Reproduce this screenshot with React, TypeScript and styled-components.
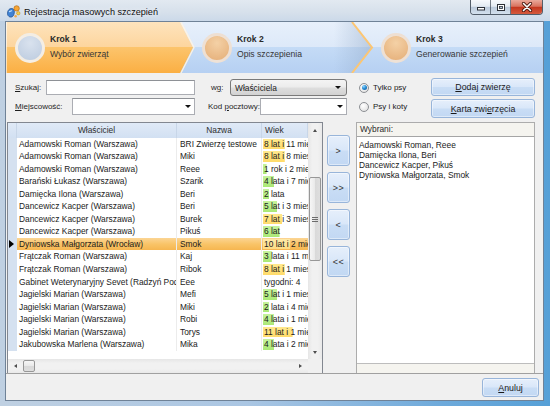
import React from 'react';
import styled, { createGlobalStyle, css } from 'styled-components';

const GlobalStyle = createGlobalStyle`
  * { box-sizing: border-box; }
  html, body { margin: 0; padding: 0; }
  body {
    width: 550px;
    height: 406px;
    overflow: hidden;
    background: #5a9bd3;
    font-family: 'Liberation Sans', Arial, sans-serif;
    color: #1b1b1b;
  }
`;

type Animal = { owner: string; name: string; age: string; years: number | null };

const animals: Animal[] = [
  { owner: 'Adamowski Roman (Warszawa)', name: 'BRI Zwierzę testowe', age: '8 lat i 11 miesięcy', years: 8 },
  { owner: 'Adamowski Roman (Warszawa)', name: 'Miki', age: '8 lat i 8 miesięcy', years: 8 },
  { owner: 'Adamowski Roman (Warszawa)', name: 'Reee', age: '1 rok i 2 miesiące', years: 1 },
  { owner: 'Barański Łukasz (Warszawa)', name: 'Szarik', age: '4 lata i 7 miesięcy', years: 4 },
  { owner: 'Damięcka Ilona (Warszawa)', name: 'Beri', age: '2 lata', years: 2 },
  { owner: 'Dancewicz Kacper (Warszawa)', name: 'Beri', age: '5 lat i 3 miesiące', years: 5 },
  { owner: 'Dancewicz Kacper (Warszawa)', name: 'Burek', age: '7 lat i 3 miesiące', years: 7 },
  { owner: 'Dancewicz Kacper (Warszawa)', name: 'Pikuś', age: '6 lat', years: 6 },
  { owner: 'Dyniowska Małgorzata (Wrocław)', name: 'Smok', age: '10 lat i 2 miesiące', years: 10 },
  { owner: 'Frątczak Roman (Warszawa)', name: 'Kaj', age: '3 lata i 11 miesięcy', years: 3 },
  { owner: 'Frątczak Roman (Warszawa)', name: 'Ribok', age: '8 lat i 1 miesiąc', years: 8 },
  { owner: 'Gabinet Weterynaryjny Sevet (Radzyń Podlaski)', name: 'Eee', age: 'tygodni: 4', years: null },
  { owner: 'Jagielski Marian (Warszawa)', name: 'Mefi', age: '5 lat i 1 miesiąc', years: 5 },
  { owner: 'Jagielski Marian (Warszawa)', name: 'Miki', age: '2 lata i 4 miesiące', years: 2 },
  { owner: 'Jagielski Marian (Warszawa)', name: 'Robi', age: '4 lata i 1 miesiąc', years: 4 },
  { owner: 'Jagielski Marian (Warszawa)', name: 'Torys', age: '11 lat i 1 miesiąc', years: 11 },
  { owner: 'Jakubowska Marlena (Warszawa)', name: 'Mika', age: '4 lata i 2 miesiące', years: 4 },
];

const SELECTED = 8;

const chosen = [
  'Adamowski Roman, Reee',
  'Damięcka Ilona, Beri',
  'Dancewicz Kacper, Pikuś',
  'Dyniowska Małgorzata, Smok',
];

type Tone = 'blue' | 'peach';
const steps: { title: string; caption: string; width?: number; tone: Tone }[] = [
  { title: 'Krok 1', caption: 'Wybór zwierząt', width: 187, tone: 'blue' },
  { title: 'Krok 2', caption: 'Opis szczepienia', width: 179, tone: 'peach' },
  { title: 'Krok 3', caption: 'Generowanie szczepień', tone: 'peach' },
];

const ROW_H = 12.56;

/* ---------- window chrome ---------- */

const Window = styled.div`
  width: 550px;
  height: 406px;
  display: flex;
  flex-direction: column;
  background: linear-gradient(to right, #bfd0e2 0%, #aac6e3 45%, #6eaadb 80%, #56a0d7 100%);
`;

const TitleBar = styled.div`
  height: 21px;
  flex: none;
  display: flex;
  align-items: flex-start;
  padding-left: 6px;
  background: linear-gradient(to bottom, #e2e9f1 0%, #d6e0eb 60%, #cbd9e9 100%);
`;

const TitleIcon = styled.svg`
  margin-top: 4px;
  flex: none;
`;

const TitleText = styled.div`
  margin-left: 3px;
  margin-top: 2px;
  line-height: 20px;
  font-size: 9.1px;
  color: #101010;
  text-shadow: 0 0 5px rgba(255, 255, 255, 0.95);
`;

const CaptionGroup = styled.div`
  margin-left: auto;
  margin-right: 7px;
  display: flex;
  height: 15px;
  border: 1px solid rgba(38, 48, 62, 0.75);
  border-top: none;
  border-radius: 0 0 4px 4px;
  overflow: hidden;
`;

const CaptionButton = styled.div<{ $close?: boolean; $w: number }>`
  width: ${(p) => p.$w}px;
  display: flex;
  align-items: center;
  justify-content: center;
  ${(p) =>
    p.$close
      ? css`
          background: linear-gradient(to bottom, #eaa99b 0%, #d9735f 45%, #c4371f 52%, #d55a3d 100%);
        `
      : css`
          border-right: 1px solid rgba(38, 48, 62, 0.6);
          background: linear-gradient(to bottom, #f7f9fc 0%, #e3eaf2 45%, #bccadb 52%, #d4e1ee 100%);
        `}
`;

const Frame = styled.div`
  flex: 1;
  display: flex;
  padding: 0 6px 5px 5px;
`;

const Client = styled.div`
  flex: 1;
  display: flex;
  flex-direction: column;
  background: #f0f0f0;
  border: 1px solid #6f8297;
  font-size: 8.4px;
`;

/* ---------- wizard header ---------- */

const Wizard = styled.div`
  position: relative;
  height: 51px;
  flex: none;
  display: flex;
  background: linear-gradient(to bottom, #e7f0fb 0%, #dde9f9 49%, #c4dbf6 50%, #b6d0f2 100%);
`;

const WizardArt = styled.svg`
  position: absolute;
  inset: 0;
  width: 100%;
  height: 100%;
`;

const Step = styled.div<{ $w?: number }>`
  position: relative;
  display: flex;
  align-items: center;
  gap: 5px;
  padding-left: 9px;
  ${(p) => (p.$w ? `width: ${p.$w}px; flex: none;` : 'flex: 1;')}
`;

const StepCircle = styled.div<{ $tone: Tone }>`
  width: 30px;
  height: 30px;
  flex: none;
  border-radius: 50%;
  border: 3px solid
    ${(p) => (p.$tone === 'blue' ? 'rgba(255, 244, 228, 0.8)' : 'rgba(238, 230, 224, 0.85)')};
  background: ${(p) =>
    p.$tone === 'blue'
      ? 'radial-gradient(circle at 50% 30%, #d9e2ee 0%, #bccbdf 100%)'
      : 'radial-gradient(circle at 50% 30%, #f4d1a6 0%, #e4ad76 100%)'};
`;

const StepText = styled.div`
  display: flex;
  flex-direction: column;
  line-height: 15px;
  margin-top: -1px;
  font-size: 8.6px;
  color: #363636;
  white-space: nowrap;
`;

const StepTitle = styled.span`
  font-weight: bold;
  color: #2a2a2a;
`;

/* ---------- search form ---------- */

const Form = styled.div`
  height: 49px;
  flex: none;
  display: flex;
  padding: 5px 0 0 9px;
`;

const Fields = styled.div`
  width: 332px;
  display: flex;
  flex-direction: column;
  gap: 2px;
  padding-top: 1px;
`;

const FieldRow = styled.div`
  display: flex;
  align-items: center;
  height: 17px;
`;

const FieldLabel = styled.span<{ $w: number; $gap?: number }>`
  width: ${(p) => p.$w}px;
  margin-left: ${(p) => p.$gap ?? 0}px;
  flex: none;
  font-size: 8px;
  white-space: nowrap;
  color: #1e1e1e;
`;

const Key = styled.span`
  text-decoration: underline;
  text-underline-offset: 1px;
`;

const TextBox = styled.div<{ $w: number }>`
  width: ${(p) => p.$w}px;
  height: 15px;
  flex: none;
  background: #fff;
  border: 1px solid #abadb3;
  border-top-color: #8e9196;
`;

const ComboBox = styled.div<{ $w: number }>`
  width: ${(p) => p.$w}px;
  height: 17px;
  flex: none;
  display: flex;
  align-items: center;
  justify-content: flex-end;
  padding-right: 3px;
  background: #fff;
  border: 1px solid #abadb3;
  border-top-color: #8e9196;
`;

const SelectButton = styled.div`
  width: 117px;
  height: 17px;
  flex: none;
  display: flex;
  align-items: center;
  justify-content: space-between;
  padding: 0 5px 0 4px;
  font-size: 8.4px;
  border: 1px solid #7a7a7a;
  border-radius: 3px;
  background: linear-gradient(to bottom, #f4f4f4 0%, #ececec 48%, #dedede 52%, #d2d2d2 100%);
`;

const DropArrow = styled.span`
  width: 0;
  height: 0;
  border-left: 3px solid transparent;
  border-right: 3px solid transparent;
  border-top: 3.5px solid #111;
`;

const RadioColumn = styled.div`
  width: 72px;
  margin-left: 12px;
  display: flex;
  flex-direction: column;
  gap: 2px;
  padding-top: 1px;
`;

const RadioRow = styled.div`
  height: 17px;
  display: flex;
  align-items: center;
  gap: 4px;
  font-size: 8px;
`;

const RadioDot = styled.span<{ $checked?: boolean }>`
  width: 10px;
  height: 10px;
  flex: none;
  border-radius: 50%;
  border: 1px solid #8c8f94;
  display: flex;
  align-items: center;
  justify-content: center;
  background: radial-gradient(circle at 40% 35%, #ffffff 0%, #e6e6e6 70%, #d4d4d4 100%);

  &::after {
    content: '';
    width: 5px;
    height: 5px;
    border-radius: 50%;
    display: ${(p) => (p.$checked ? 'block' : 'none')};
    background: radial-gradient(circle at 35% 30%, #8fd6ff 0%, #2a8ed6 45%, #0d4f8f 100%);
  }
`;

const ButtonColumn = styled.div`
  width: 104px;
  display: flex;
  flex-direction: column;
  gap: 3px;
`;

const AeroButton = styled.div<{ $w?: number; $h?: number }>`
  ${(p) => (p.$w ? `width: ${p.$w}px;` : '')}
  height: ${(p) => p.$h ?? 18}px;
  display: flex;
  align-items: center;
  justify-content: center;
  font-size: 8.8px;
  color: #1a1a1a;
  border: 1px solid #98b5da;
  border-radius: 3px;
  background: linear-gradient(to bottom, #e6effb 0%, #d9e7f9 48%, #c9ddf5 52%, #c2d8f3 100%);
  box-shadow: inset 0 0 0 1px rgba(255, 255, 255, 0.45);
`;

/* ---------- main area ---------- */

const Main = styled.div`
  height: 251px;
  flex: none;
  display: flex;
  padding-left: 1px;
`;

const Grid = styled.div`
  width: 316px;
  height: 251px;
  flex: none;
  display: grid;
  grid-template-columns: 300px 14px;
  grid-template-rows: 1fr 14px;
  border: 1px solid #828790;
  border-bottom: none;
  background: #fff;
`;

const GridBody = styled.div`
  display: flex;
  flex-direction: column;
  overflow: hidden;
`;

const GRID_COLS = '9px 160px 85px 46px';

const HeaderRow = styled.div`
  height: 14.5px;
  flex: none;
  display: grid;
  grid-template-columns: ${GRID_COLS};
  background: linear-gradient(to bottom, #e0eaf7 0%, #d2e0f2 100%);
  color: #2f2f2f;
  line-height: 14.5px;
`;

const HeaderCell = styled.div<{ $align?: 'left' | 'center' }>`
  text-align: ${(p) => p.$align ?? 'center'};
  padding-left: ${(p) => (p.$align === 'left' ? '3px' : '0')};
  border-right: 1px solid #c8d6e8;
  white-space: nowrap;
  overflow: hidden;
`;

const Rows = styled.div`
  flex: 1;
  display: flex;
  flex-direction: column;
`;

const Row = styled.div<{ $selected?: boolean }>`
  height: ${ROW_H}px;
  flex: none;
  display: grid;
  grid-template-columns: ${GRID_COLS};
  line-height: ${ROW_H}px;
  background: ${(p) =>
    p.$selected ? 'linear-gradient(to bottom, #fcd594 0%, #f9c468 50%, #f6b650 100%)' : '#fff'};
`;

const RowHeader = styled.div`
  background: #d5e1f0;
  display: flex;
  align-items: center;
  padding-left: 1px;
`;

const Pointer = styled.span`
  width: 0;
  height: 0;
  border-top: 4px solid transparent;
  border-bottom: 4px solid transparent;
  border-left: 5px solid #000;
`;

const Cell = styled.div<{ $pad: number; $sep?: boolean }>`
  padding-left: ${(p) => p.$pad}px;
  white-space: nowrap;
  overflow: hidden;
  ${(p) => (p.$sep ? 'border-right: 1px solid #ececec;' : '')}
`;

type Bar = 'old' | 'young' | 'current';
const barColors: Record<Bar, string> = {
  old: 'linear-gradient(to bottom, #ffe98e, #ffdb6a)',
  young: 'linear-gradient(to bottom, #c6f39d, #aae875)',
  current: 'linear-gradient(to bottom, #feeaa8, #fddc84)',
};

const AgeCell = styled(Cell)<{ $bar?: Bar }>`
  background-repeat: no-repeat;
  background-position: 1px 1px;
  background-image: ${(p) => (p.$bar ? barColors[p.$bar] : 'none')};
`;

const VScroll = styled.div`
  grid-column: 2;
  grid-row: 1;
  display: flex;
  flex-direction: column;
  background: linear-gradient(to right, #e6e6e6 0%, #f1f1f1 30%, #f1f1f1 70%, #e9e9e9 100%);
`;

const HScroll = styled.div`
  grid-column: 1;
  grid-row: 2;
  display: flex;
  align-items: center;
  background: linear-gradient(to bottom, #e6e6e6 0%, #f1f1f1 30%, #f1f1f1 70%, #e9e9e9 100%);
`;

const ScrollCorner = styled.div`
  grid-column: 2;
  grid-row: 2;
  background: #f0f0f0;
`;

const ArrowBox = styled.div<{ $end?: boolean }>`
  flex: none;
  width: 14px;
  height: 14px;
  display: flex;
  align-items: center;
  justify-content: center;
  ${(p) => (p.$end ? 'margin-top: auto;' : '')}
`;

const HArrowBox = styled(ArrowBox)<{ $right?: boolean }>`
  width: 15px;
  ${(p) => (p.$right ? 'margin-left: auto;' : '')}
`;

type Dir = 'up' | 'down' | 'left' | 'right';
const ScrollArrow = styled.span<{ $dir: Dir }>`
  width: 0;
  height: 0;
  ${(p) => {
    const c = '#4d4d4d';
    switch (p.$dir) {
      case 'up':
        return `border-left: 2.5px solid transparent; border-right: 2.5px solid transparent; border-bottom: 3px solid ${c};`;
      case 'down':
        return `border-left: 2.5px solid transparent; border-right: 2.5px solid transparent; border-top: 3px solid ${c};`;
      case 'left':
        return `border-top: 2.5px solid transparent; border-bottom: 2.5px solid transparent; border-right: 3px solid ${c};`;
      default:
        return `border-top: 2.5px solid transparent; border-bottom: 2.5px solid transparent; border-left: 3px solid ${c};`;
    }
  }}
`;

const Thumb = styled.div<{ $vertical?: boolean; $offset: number; $len: number }>`
  flex: none;
  display: flex;
  align-items: center;
  justify-content: center;
  border: 1px solid #979797;
  border-radius: 2px;
  ${(p) =>
    p.$vertical
      ? css`
          width: 12px;
          margin-left: 1px;
          margin-top: ${p.$offset}px;
          height: ${p.$len}px;
          background: linear-gradient(to right, #f6f6f6 0%, #e9e9e9 50%, #d9d9d9 52%, #dedede 100%);
        `
      : css`
          height: 12px;
          margin-left: ${p.$offset}px;
          width: ${p.$len}px;
          background: linear-gradient(to bottom, #f6f6f6 0%, #e9e9e9 50%, #d9d9d9 52%, #dedede 100%);
        `}
`;

const Grip = styled.span`
  width: 6px;
  height: 5px;
  background: repeating-linear-gradient(to bottom, #6c6c6c 0 1px, transparent 1px 2px);
`;

const MoveColumn = styled.div`
  width: 23px;
  margin-left: 4px;
  flex: none;
  display: flex;
  flex-direction: column;
  gap: 6px;
  padding-top: 13px;
`;

const MoveButton = styled(AeroButton)`
  font-size: 9px;
  color: #333;
  letter-spacing: 0.5px;
`;

const Selected = styled.div`
  width: 179px;
  margin-left: 6px;
  flex: none;
  display: flex;
  flex-direction: column;
  background: #f5f4ef;
  border: 1px solid #acacac;
  border-bottom: none;
  padding-bottom: 9px;
`;

const SelectedTitle = styled.div`
  height: 13px;
  line-height: 13px;
  padding-left: 3px;
  color: #2b2b2b;
`;

const SelectedList = styled.div`
  flex: 1;
  background: #fff;
  border-top: 1px solid #a5a5a5;
  border-bottom: 1px solid #bdbdbd;
  padding: 3px 2px;
  line-height: 10px;
  color: #1b1b1b;
`;

const Footer = styled.div`
  flex: 1;
  display: flex;
  justify-content: flex-end;
  align-items: flex-start;
  padding: 4px 4px 0 0;
  border-top: 1px solid #a0a0a0;
`;

/* ---------- small drawings ---------- */

const AppIcon = () => (
  <TitleIcon width="15" height="15" viewBox="0 0 15 15">
    <path d="M1.5 9.5C1.5 6 4 4 6.3 4.6 8.7 5.3 9 8.8 7.2 11.8 5.6 14.2 1.5 13 1.5 9.5Z" fill="#3f82d4" stroke="#1c4d8f" strokeWidth="0.8" />
    <path d="M3.4 7.6 5.6 6.8" stroke="#bfe0ff" strokeWidth="1.2" strokeLinecap="round" />
    <circle cx="10.6" cy="4.4" r="2.7" fill="#f6a636" stroke="#ab620f" strokeWidth="0.6" />
    <circle cx="12.3" cy="9.2" r="1.7" fill="#f7cd4d" stroke="#b98a16" strokeWidth="0.5" />
    <circle cx="9.6" cy="12.2" r="1.2" fill="#f2a94a" />
  </TitleIcon>
);

const MinGlyph = () => (
  <svg width="10" height="8" viewBox="0 0 10 8">
    <rect x="1.5" y="4.5" width="7" height="2.5" fill="#fff" stroke="#2b2f36" strokeWidth="1" />
  </svg>
);

const MaxGlyph = () => (
  <svg width="10" height="9" viewBox="0 0 10 9">
    <rect x="1.5" y="1.5" width="7" height="6" fill="none" stroke="#2b2f36" strokeWidth="1" />
    <rect x="2.5" y="2.5" width="5" height="4" fill="none" stroke="#fff" strokeWidth="1" />
    <rect x="3.5" y="3.5" width="3" height="2" fill="none" stroke="#2b2f36" strokeWidth="0.8" />
  </svg>
);

const CloseGlyph = () => (
  <svg width="12" height="10" viewBox="0 0 12 10">
    <path d="M2.5 1.5 9.5 8.5M9.5 1.5 2.5 8.5" stroke="#4a1a12" strokeWidth="3.2" strokeLinecap="round" />
    <path d="M2.5 1.5 9.5 8.5M9.5 1.5 2.5 8.5" stroke="#fff" strokeWidth="1.6" strokeLinecap="round" />
  </svg>
);

const WizardShapes = () => (
  <WizardArt viewBox="0 0 537 51" preserveAspectRatio="none">
    <defs>
      <linearGradient id="stepActive" x1="0" y1="0" x2="0" y2="1">
        <stop offset="0" stopColor="#fee4bd" />
        <stop offset="0.49" stopColor="#fdd59e" />
        <stop offset="0.5" stopColor="#fcc46c" />
        <stop offset="1" stopColor="#fbaf43" />
      </linearGradient>
      <linearGradient id="chevronShade" x1="0" y1="0" x2="1" y2="0">
        <stop offset="0" stopColor="#8ea6c4" stopOpacity="0" />
        <stop offset="1" stopColor="#8ea6c4" stopOpacity="0.45" />
      </linearGradient>
    </defs>
    <polygon points="0,0 174,0 187,25.5 174,51 0,51" fill="url(#stepActive)" />
    <polyline points="175,0 188,25.5 175,51" fill="none" stroke="#fff4e2" strokeWidth="1.3" opacity="0.9" />
    <polygon points="328,0 346,0 366,25.5 346,51 328,51" fill="url(#chevronShade)" />
    <polyline points="346,0 366,25.5 346,51" fill="none" stroke="#fdc672" strokeWidth="2" />
    <line x1="0.5" y1="0" x2="0.5" y2="51" stroke="#fff" strokeOpacity="0.6" />
  </WizardArt>
);

/* ---------- page ---------- */

const barFor = (a: Animal, current: boolean): Bar | undefined => {
  if (a.years === null) return undefined;
  if (current) return 'current';
  return a.years >= 7 ? 'old' : 'young';
};

export default function App() {
  return (
    <>
      <GlobalStyle />
      <Window>
        <TitleBar>
          <AppIcon />
          <TitleText>Rejestracja masowych szczepień</TitleText>
          <CaptionGroup>
            <CaptionButton $w={20}>
              <MinGlyph />
            </CaptionButton>
            <CaptionButton $w={20}>
              <MaxGlyph />
            </CaptionButton>
            <CaptionButton $w={31} $close>
              <CloseGlyph />
            </CaptionButton>
          </CaptionGroup>
        </TitleBar>

        <Frame>
          <Client>
            <Wizard>
              <WizardShapes />
              {steps.map((s) => (
                <Step key={s.title} $w={s.width}>
                  <StepCircle $tone={s.tone} />
                  <StepText>
                    <StepTitle>{s.title}</StepTitle>
                    <span>{s.caption}</span>
                  </StepText>
                </Step>
              ))}
            </Wizard>

            <Form>
              <Fields>
                <FieldRow>
                  <FieldLabel $w={31}>
                    <Key>S</Key>zukaj:
                  </FieldLabel>
                  <TextBox $w={149} />
                  <FieldLabel $w={19} $gap={16}>
                    w<Key>g</Key>:
                  </FieldLabel>
                  <SelectButton>
                    <span>Właściciela</span>
                    <DropArrow />
                  </SelectButton>
                </FieldRow>
                <FieldRow>
                  <FieldLabel $w={57}>
                    <Key>M</Key>iejscowość:
                  </FieldLabel>
                  <ComboBox $w={123}>
                    <DropArrow />
                  </ComboBox>
                  <FieldLabel $w={52} $gap={13}>
                    Kod <Key>p</Key>ocztowy:
                  </FieldLabel>
                  <ComboBox $w={87}>
                    <DropArrow />
                  </ComboBox>
                </FieldRow>
              </Fields>

              <RadioColumn>
                <RadioRow>
                  <RadioDot $checked />
                  Tylko psy
                </RadioRow>
                <RadioRow>
                  <RadioDot />
                  Psy i koty
                </RadioRow>
              </RadioColumn>

              <ButtonColumn>
                <AeroButton>
                  <Key>D</Key>odaj zwierzę
                </AeroButton>
                <AeroButton $h={19}>
                  <Key>K</Key>arta zwi<Key>e</Key>rzęcia
                </AeroButton>
              </ButtonColumn>
            </Form>

            <Main>
              <Grid>
                <GridBody>
                  <HeaderRow>
                    <HeaderCell />
                    <HeaderCell>Właściciel</HeaderCell>
                    <HeaderCell>Nazwa</HeaderCell>
                    <HeaderCell $align="left">Wiek</HeaderCell>
                  </HeaderRow>
                  <Rows>
                    {animals.map((a, i) => {
                      const current = i === SELECTED;
                      const bar = barFor(a, current);
                      const barWidth = a.years === null ? 0 : a.years * 2.6 + 1;
                      return (
                        <Row key={i} $selected={current}>
                          <RowHeader>{current && <Pointer />}</RowHeader>
                          <Cell $pad={2} $sep>
                            {a.owner}
                          </Cell>
                          <Cell $pad={3} $sep>
                            {a.name}
                          </Cell>
                          <AgeCell
                            $pad={2}
                            $bar={bar}
                            style={{ backgroundSize: `${barWidth}px calc(100% - 2px)` }}
                          >
                            {a.age}
                          </AgeCell>
                        </Row>
                      );
                    })}
                  </Rows>
                </GridBody>

                <VScroll>
                  <ArrowBox>
                    <ScrollArrow $dir="up" />
                  </ArrowBox>
                  <Thumb $vertical $offset={40} $len={84}>
                    <Grip />
                  </Thumb>
                  <ArrowBox $end>
                    <ScrollArrow $dir="down" />
                  </ArrowBox>
                </VScroll>

                <HScroll>
                  <HArrowBox>
                    <ScrollArrow $dir="left" />
                  </HArrowBox>
                  <Thumb $offset={0} $len={12} />
                  <HArrowBox $right>
                    <ScrollArrow $dir="right" />
                  </HArrowBox>
                </HScroll>
                <ScrollCorner />
              </Grid>

              <MoveColumn>
                <MoveButton $h={31}>&gt;</MoveButton>
                <MoveButton $h={31}>&gt;&gt;</MoveButton>
                <MoveButton $h={31}>&lt;</MoveButton>
                <MoveButton $h={31}>&lt;&lt;</MoveButton>
              </MoveColumn>

              <Selected>
                <SelectedTitle>Wybrani:</SelectedTitle>
                <SelectedList>
                  {chosen.map((c) => (
                    <div key={c}>{c}</div>
                  ))}
                </SelectedList>
              </Selected>
            </Main>

            <Footer>
              <AeroButton $w={57} $h={19}>
                <Key>A</Key>nuluj
              </AeroButton>
            </Footer>
          </Client>
        </Frame>
      </Window>
    </>
  );
}
